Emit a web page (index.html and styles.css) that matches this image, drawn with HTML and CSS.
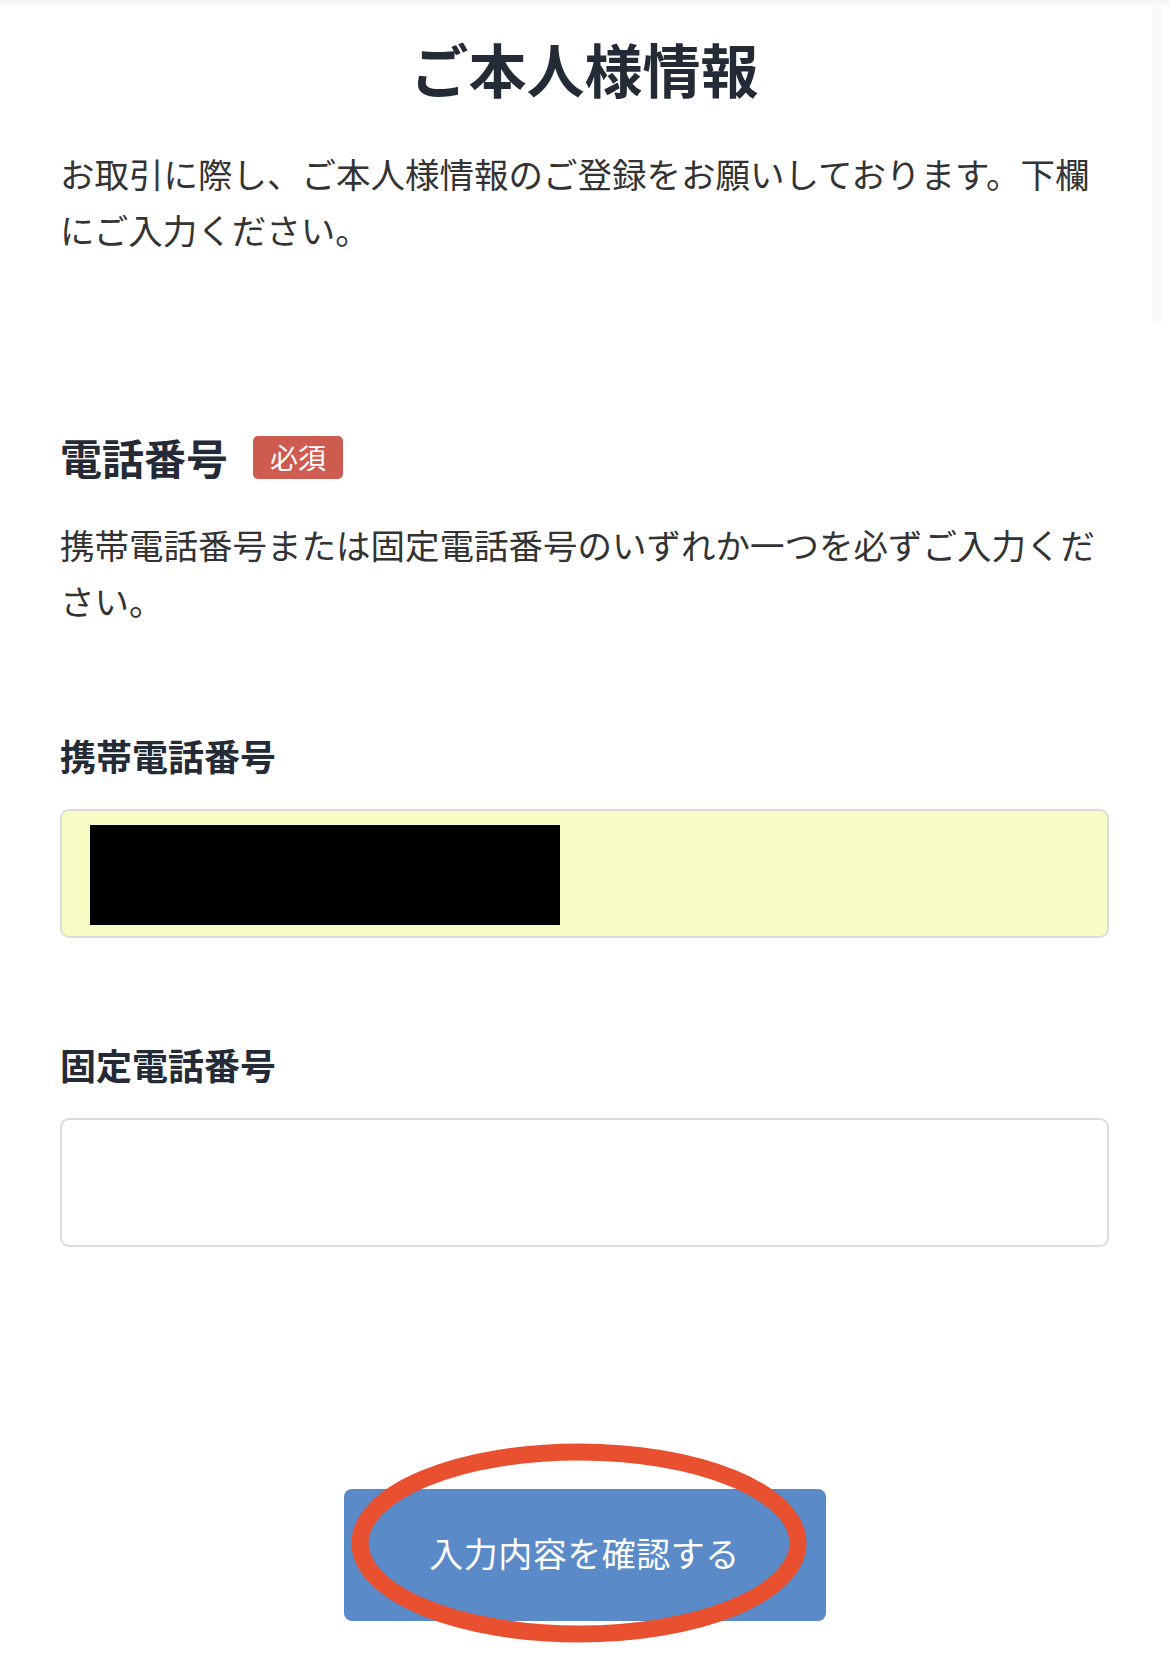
FILE: index.html
```html
<!DOCTYPE html>
<html lang="ja">
<head>
  <meta charset="UTF-8">
  <title>ご本人様情報</title>
  <meta name="viewport" content="width=device-width, initial-scale=1.0">
  <link rel="stylesheet" href="styles.css">
</head>
<body>
  <div class="scrollbar"></div>

  <main class="page">
    <h1 class="title">ご本人様情報</h1>
    <p class="intro">お取引に際し、ご本人様情報のご登録をお願いしております。下欄にご入力ください。</p>

    <section class="section">
      <h2 class="section-title">電話番号 <span class="badge">必須</span></h2>
      <p class="note">携帯電話番号または固定電話番号のいずれか一つを必ずご入力ください。</p>

      <div class="group">
        <label class="label">携帯電話番号</label>
        <div class="field autofill"><span class="redacted"></span></div>
      </div>

      <div class="group">
        <label class="label">固定電話番号</label>
        <div class="field"></div>
      </div>
    </section>

    <div class="actions">
      <button class="confirm">入力内容を確認する</button>
      <svg class="circle" width="480" height="220" viewBox="0 0 480 220">
        <ellipse cx="240" cy="110" rx="219" ry="91" fill="none" stroke="#e8502f" stroke-width="17"/>
      </svg>
    </div>
  </main>
</body>
</html>
```

FILE: styles.css
```css
body { margin: 0; background: #fff; color: #333; font-family: "Noto Sans CJK JP", "Noto Sans", sans-serif; border-top: 5px solid #f7f7f7; position: relative; min-height: 1659px; }
.scrollbar { position: absolute; top: 0; left: 1152px; width: 10px; height: 317px; background: #fafafa; }

.page { padding: 0 60px 50px; }

.title { margin: 0; padding-top: 23px; font-size: 58px; line-height: 81px; font-weight: 700; text-align: center; color: #252b36; }
.intro { margin: 36px 0 0; font-size: 34.5px; line-height: 56px; color: #333; }

.section { margin-top: 172px; }
.section-title { margin: 0; display: flex; align-items: center; gap: 25px; font-size: 42px; line-height: 56px; font-weight: 700; color: #252b36; }
.badge { display: inline-block; padding: 0 17px; height: 43px; line-height: 43px; border-radius: 5px; background: #cd5b50; color: #fff; font-size: 28px; font-weight: 400; }
.note { margin: 31px 0 0; font-size: 34.5px; line-height: 56px; }

.group { margin-top: 102px; }
.group + .group { margin-top: 101px; }
.label { display: block; font-size: 36px; line-height: 50px; font-weight: 700; color: #252b36; }
.field { box-sizing: border-box; margin-top: 29px; height: 129px; border: 2px solid #dcdcdc; border-radius: 9px; background: #fff; padding: 14px 28px; }
.field.autofill { background: #f9fcc4; }
.redacted { display: block; width: 470px; height: 100px; background: #000; }

.actions { position: relative; margin-top: 242px; display: flex; justify-content: center; }
.confirm { width: 482px; height: 132px; border: none; border-radius: 8px; background: #5a8ac7; color: #fff; font-family: inherit; font-size: 34px; letter-spacing: 0.5px; padding: 0 0 6px; }
.circle { position: absolute; left: 279px; top: -56px; overflow: visible; }
```
